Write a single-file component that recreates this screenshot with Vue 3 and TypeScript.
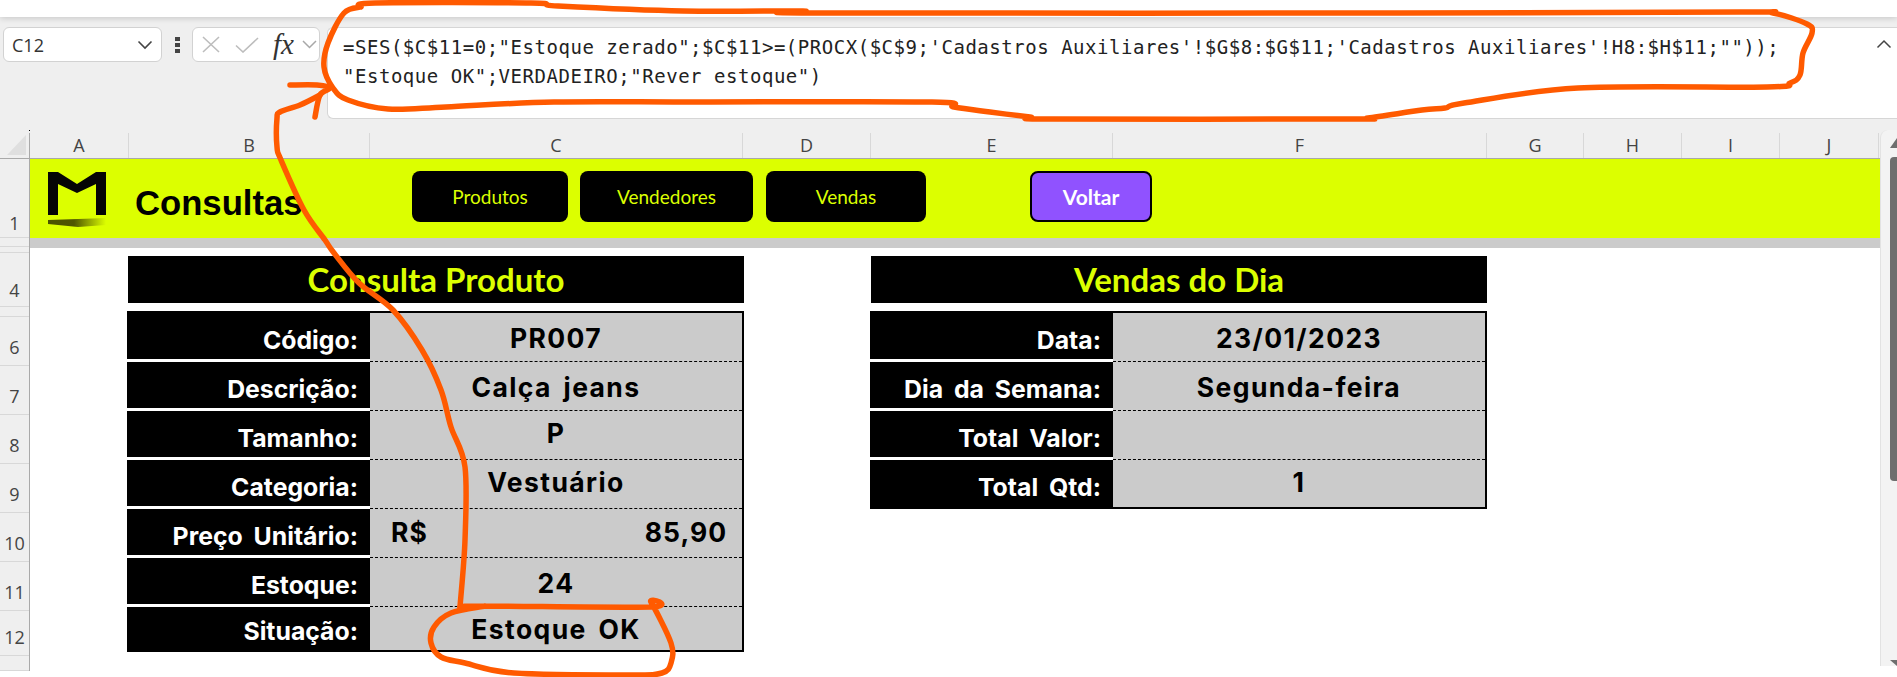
<template>
  <div class="excel">
    <div class="ribbon-edge"></div>

    <div class="formula-bar">
      <div class="name-box">
        <span>C12</span>
        <svg width="16" height="10" viewBox="0 0 16 10"><path d="M1.500 1.500 8 8l6.500-6.500" fill="none" stroke="#444" stroke-width="1.600"/></svg>
      </div>
      <div class="grip"><i></i><i></i><i></i></div>
      <div class="fx-box">
        <svg width="18" height="17" viewBox="0 0 18 17"><path d="M1 1l16 15M17 1 1 16" fill="none" stroke="#bdbdbd" stroke-width="1.600"/></svg>
        <svg class="check-icon" width="24" height="16" viewBox="0 0 24 16"><path d="M1 8.500l7 6.500L23 1" fill="none" stroke="#bdbdbd" stroke-width="1.600"/></svg>
        <span class="fx-label">fx</span>
        <svg width="15" height="9" viewBox="0 0 15 9"><path d="M1 1l6.500 6.500L14 1" fill="none" stroke="#a8a8a8" stroke-width="1.500"/></svg>
      </div>
      <div class="formula-input">
        <div class="formula-text">
          <div>{{ formulaLines[0] }}</div>
          <div>{{ formulaLines[1] }}</div>
        </div>
        <svg class="collapse" width="16" height="10" viewBox="0 0 16 10"><path d="M1.500 8.500 8 2l6.500 6.500" fill="none" stroke="#444" stroke-width="1.500"/></svg>
      </div>
    </div>

    <div class="column-bar">
      <div class="select-all"><div class="corner"></div></div>
      <div
        v-for="col in columns"
        :key="col.name"
        class="column-head"
        :style="{ width: col.width + 'px' }"
      >
        {{ col.name }}
      </div>
    </div>

    <div class="sheet-area">
      <div class="row-bar">
        <div
          v-for="row in rows"
          :key="row.key"
          class="row-head"
          :style="{ height: row.height + 'px' }"
        >
          {{ row.label }}
        </div>
      </div>

      <div class="sheet">
        <div class="banner">
          <svg class="logo" width="58" height="55" viewBox="0 0 58 55">
            <defs>
              <linearGradient id="swoosh" x1="0" x2="1" y1="0" y2="0">
                <stop offset="0" stop-color="#4a5200"/>
                <stop offset="0.45" stop-color="#4f5600"/>
                <stop offset="1" stop-color="#dcff00"/>
              </linearGradient>
            </defs>
            <path d="M0 0H10L29 12 48 0H58V43H48V12L29 21 10 12V43H0Z" fill="#050505"/>
            <path d="M0 48 30 47 58 46V53L30 55 0 52Z" fill="url(#swoosh)"/>
          </svg>
          <div class="banner-title">Consultas</div>
          <div class="nav">
            <button class="nav-btn nav-btn--produtos">Produtos</button>
            <button class="nav-btn nav-btn--vendedores">Vendedores</button>
            <button class="nav-btn nav-btn--vendas">Vendas</button>
            <button class="nav-btn nav-btn--voltar">Voltar</button>
          </div>
        </div>
        <div class="banner-shadow"></div>

        <div class="panels">
          <section v-for="panel in panels" :key="panel.title" class="panel">
            <h2 class="panel-title">{{ panel.title }}</h2>
            <div class="panel-table">
              <div v-for="item in panel.items" :key="item.label" class="panel-row">
                <div class="panel-label">{{ item.label }}</div>
                <div
                  class="panel-value"
                  :class="{ 'panel-value--money': item.money, 'panel-value--raised': item.raised }"
                >
                  <template v-if="item.money">
                    <span>R$</span>
                    <span>{{ item.value }}</span>
                  </template>
                  <template v-else>{{ item.value }}</template>
                </div>
              </div>
            </div>
          </section>
        </div>
      </div>

      <div class="scrollbar">
        <div class="scroll-arrow"></div>
        <div class="scroll-thumb"></div>
        <div class="scroll-arrow scroll-arrow--down"></div>
      </div>
    </div>

    <svg class="ink" width="1897" height="677" viewBox="0 0 1897 677">
      <path v-for="(d, i) in inkPaths" :key="i" :d="d" fill="none" stroke="#ff5a00" stroke-width="5.500" stroke-linecap="round" stroke-linejoin="round"/>
    </svg>
  </div>
</template>

<script setup lang="ts">
type Point = [number, number]

interface PanelItem {
  label: string
  value: string
  money?: boolean
  raised?: boolean
}

const formulaLines = [
  `=SES($C$11=0;"Estoque zerado";$C$11>=(PROCX($C$9;'Cadastros Auxiliares'!$G$8:$G$11;'Cadastros Auxiliares'!H8:$H$11;""));`,
  `"Estoque OK";VERDADEIRO;"Rever estoque")`,
]

const columns = [
  { name: 'A', width: 99 },
  { name: 'B', width: 241 },
  { name: 'C', width: 373 },
  { name: 'D', width: 128 },
  { name: 'E', width: 242 },
  { name: 'F', width: 374 },
  { name: 'G', width: 97 },
  { name: 'H', width: 98 },
  { name: 'I', width: 98 },
  { name: 'J', width: 99 },
]

const rows = [
  { key: 'r1', label: '1', height: 80 },
  { key: 'r2', label: '', height: 9 },
  { key: 'r3', label: '', height: 1 },
  { key: 'r4', label: '4', height: 54 },
  { key: 'r5', label: '', height: 10 },
  { key: 'r6', label: '6', height: 49 },
  { key: 'r7', label: '7', height: 49 },
  { key: 'r8', label: '8', height: 49 },
  { key: 'r9', label: '9', height: 49 },
  { key: 'r10', label: '10', height: 49 },
  { key: 'r11', label: '11', height: 49 },
  { key: 'r12', label: '12', height: 45 },
  { key: 'r13', label: '', height: 15 },
]

const panels: { title: string; items: PanelItem[] }[] = [
  {
    title: 'Consulta Produto',
    items: [
      { label: 'Código:', value: 'PR007' },
      { label: 'Descrição:', value: 'Calça jeans' },
      { label: 'Tamanho:', value: 'P', raised: true },
      { label: 'Categoria:', value: 'Vestuário', raised: true },
      { label: 'Preço Unitário:', value: '85,90', money: true, raised: true },
      { label: 'Estoque:', value: '24' },
      { label: 'Situação:', value: 'Estoque OK', raised: true },
    ],
  },
  {
    title: 'Vendas do Dia',
    items: [
      { label: 'Data:', value: '23/01/2023' },
      { label: 'Dia da Semana:', value: 'Segunda-feira' },
      { label: 'Total Valor:', value: '' },
      { label: 'Total Qtd:', value: '1', raised: true },
    ],
  },
]

// the orange pen marks drawn over the screenshot
const formulaLoop: Point[] = [
  [361, 7], [375, 3], [531, 3], [558, 6], [683, 11], [803, 11], [820, 13], [1400, 13], [1740, 12],
  [1773, 13], [1807, 24], [1812, 33], [1803, 53], [1800, 75], [1790, 83], [1767, 87], [1578, 88],
  [1464, 103], [1445, 108], [1422, 110], [1368, 118], [1349, 119], [1053, 119], [1030, 117],
  [990, 112], [954, 107], [932, 102], [700, 102], [554, 102], [446, 107], [388, 109], [348, 100],
  [333, 88], [324, 67], [328, 43], [344, 13], [361, 7],
]
const arrowHead: Point[] = [[290, 85], [317, 85], [330, 88], [320, 95], [315, 117]]
const arrowLine: Point[] = [
  [320, 95], [300, 105], [280, 112], [277, 118], [277, 147], [281, 160], [304, 210], [325, 240],
  [334, 253], [359, 283], [393, 310], [422, 350], [441, 390], [451, 427], [465, 467], [465, 540], [460, 607],
]
const statusLoop: Point[] = [
  [460, 607], [485, 606], [650, 607], [651, 602], [671, 643], [671, 663], [662, 673], [630, 675],
  [514, 673], [465, 663], [441, 657], [431, 643], [434, 627], [451, 613], [485, 606],
]

function smooth(points: Point[]): string {
  let d = `M${points[0][0]} ${points[0][1]}`
  for (let i = 0; i < points.length - 1; i++) {
    const p0 = points[Math.max(i - 1, 0)]
    const p1 = points[i]
    const p2 = points[i + 1]
    const p3 = points[Math.min(i + 2, points.length - 1)]
    const c1x = p1[0] + (p2[0] - p0[0]) / 6
    const c1y = p1[1] + (p2[1] - p0[1]) / 6
    const c2x = p2[0] - (p3[0] - p1[0]) / 6
    const c2y = p2[1] - (p3[1] - p1[1]) / 6
    d += `C${c1x.toFixed(1)} ${c1y.toFixed(1)} ${c2x.toFixed(1)} ${c2y.toFixed(1)} ${p2[0]} ${p2[1]}`
  }
  return d
}

const inkPaths = [formulaLoop, arrowHead, arrowLine, statusLoop].map(smooth)
</script>

<style>
html,
body {
  margin: 0;
  background: #fff;
}
</style>

<style scoped>
.excel {
  position: relative;
  width: 1897px;
  height: 677px;
  overflow: hidden;
  background: #fff;
  font-family: "Open Sans", "Liberation Sans", sans-serif;
}

.ribbon-edge {
  height: 17px;
  background: #fff;
  box-shadow: 0 1px 6px rgba(0, 0, 0, 0.18);
  position: relative;
}

.formula-bar {
  height: 116px;
  box-sizing: border-box;
  padding: 10px 0 0 3px;
  background: #efefef;
  display: flex;
  align-items: flex-start;
}

.name-box {
  width: 159px;
  height: 35px;
  box-sizing: border-box;
  padding: 0 8px 0 8px;
  background: #fff;
  border: 1px solid #d2d2d2;
  border-radius: 6px;
  display: flex;
  align-items: center;
  justify-content: space-between;
  font-size: 18px;
  color: #333;
}

.grip {
  width: 30px;
  height: 35px;
  display: flex;
  flex-direction: column;
  align-items: center;
  justify-content: center;
  gap: 2px;
}

.grip i {
  width: 5px;
  height: 4px;
  background: #444;
}

.fx-box {
  width: 128px;
  height: 35px;
  box-sizing: border-box;
  padding: 0 2px 0 9px;
  background: #fff;
  border: 1px solid #d2d2d2;
  border-radius: 6px;
  display: flex;
  align-items: center;
}

.check-icon {
  margin-left: 15px;
}

.fx-label {
  width: 21px;
  margin: 0 8px 0 14px;
  font-family: "Liberation Serif", serif;
  font-style: italic;
  font-size: 29px;
  line-height: 33px;
  color: #333;
}

.formula-input {
  margin-left: 7px;
  flex: 1;
  height: 92px;
  box-sizing: border-box;
  padding: 5px 0 0 15px;
  background: #fff;
  border: 1px solid #d6d6d6;
  border-right: none;
  border-radius: 6px 0 0 6px;
  position: relative;
}

.formula-text {
  font-family: "DejaVu Sans Mono", monospace;
  font-size: 19px;
  letter-spacing: 0.53px;
  line-height: 29px;
  color: #222;
  white-space: pre;
}

.collapse {
  position: absolute;
  right: 5px;
  top: 11px;
}

.column-bar {
  height: 25px;
  display: flex;
  background: #efefef;
  border-bottom: 1px solid #a9a9a9;
  margin-bottom: -1px;
  position: relative;
  padding-right: 18px;
}

.select-all {
  position: relative;
  width: 30px;
  box-sizing: border-box;
  padding: 2px 3px 3px 7px;
  border-right: 1px solid #a9a9a9;
}

.select-all::before {
  content: "";
  position: absolute;
  right: -1px;
  top: -3px;
  width: 1px;
  height: 1px;
  background: #000;
}

.corner {
  width: 100%;
  height: 100%;
  background: #dfdfdf;
  clip-path: polygon(100% 0, 100% 100%, 0 100%);
}

.column-head {
  box-sizing: border-box;
  border-right: 1px solid #d8d8d8;
  text-align: center;
  font-size: 18px;
  line-height: 25px;
  color: #444;
}

.sheet-area {
  display: flex;
  align-items: flex-start;
}

.row-bar {
  width: 30px;
  flex: none;
  background: #efefef;
  border-right: 1px solid #a9a9a9;
  box-sizing: border-box;
}

.row-head {
  box-sizing: border-box;
  border-bottom: 1px solid #d8d8d8;
  padding-bottom: 5px;
  overflow: hidden;
  display: flex;
  align-items: flex-end;
  justify-content: center;
  font-size: 18px;
  line-height: 25px;
  color: #444;
}

.row-head:first-child {
  padding-bottom: 1px;
}

.row-head:nth-child(4) {
  padding-bottom: 3px;
}

.sheet {
  width: 1850px;
  flex: none;
}

.banner {
  height: 80px;
  background: #dcff00;
  display: flex;
  align-items: flex-start;
}

.logo {
  margin: 14px 0 0 18px;
  flex: none;
}

.banner-title {
  margin: 25px 0 0 29px;
  width: 277px;
  flex: none;
  font-family: "Liberation Sans", Arial, sans-serif;
  font-weight: 700;
  font-size: 34.670px;
  line-height: 40px;
  color: #000;
}

.nav {
  display: flex;
  margin-top: 13px;
  gap: 12px;
}

.nav-btn {
  height: 51px;
  padding: 0;
  background: #000;
  border: none;
  border-radius: 8px;
  font-family: Lato, "Open Sans", sans-serif;
  font-size: 19px;
  color: #dcff00;
}

.nav-btn--produtos {
  width: 156px;
}

.nav-btn--vendedores {
  width: 173px;
}

.nav-btn--vendas {
  width: 160px;
  margin-left: 1px;
}

.nav-btn--voltar {
  width: 122px;
  margin-left: 92px;
  box-sizing: border-box;
  background: #9052ff;
  border: 2px solid #000;
  font-weight: 700;
  font-size: 21px;
  color: #fff;
}

.banner-shadow {
  height: 10px;
  background: #cbcbcb;
}

.panels {
  display: flex;
  gap: 126px;
  padding: 8px 0 0 97px;
  background: #fff;
}

.panel {
  width: 617px;
}

.panel-title {
  margin: 0 0 8px 1px;
  height: 47px;
  background: #000;
  color: #dcff00;
  text-align: center;
  font-family: Lato, "Open Sans", sans-serif;
  font-weight: 700;
  font-size: 33px;
  line-height: 46px;
}

.panel-table {
  border: 2px solid #000;
  border-left: none;
  background: #000;
}

.panel-row {
  display: flex;
  height: 49px;
  box-sizing: border-box;
}

.panel:first-child .panel-row:last-child {
  height: 43px;
}

.panel:last-child .panel-row:last-child {
  height: 47px;
}

.panel-row:not(:last-child) .panel-label {
  border-bottom: 3px solid #fff;
}

.panel-row:not(:last-child) .panel-value {
  border-bottom: 1px dashed #000;
}

.panel-label {
  width: 243px;
  flex: none;
  box-sizing: border-box;
  padding: 10px 12px 0 0;
  background: #000;
  color: #fff;
  text-align: right;
  font-family: Inter, "Liberation Sans", sans-serif;
  font-weight: 700;
  font-size: 24.800px;
  word-spacing: 5px;
  line-height: 34px;
  white-space: nowrap;
}

.panel:first-child .panel-row:last-child .panel-label {
  padding-top: 7px;
}

.panel-value {
  flex: 1;
  box-sizing: border-box;
  padding-top: 3px;
  background: #cbcbcb;
  color: #000;
  text-align: center;
  font-family: Inter, "Liberation Sans", sans-serif;
  font-weight: 700;
  font-size: 26.500px;
  letter-spacing: 1.400px;
  word-spacing: 4px;
  line-height: 44px;
  white-space: nowrap;
}

.panel-value--raised {
  padding-top: 0;
}

.panel-value--money {
  display: flex;
  justify-content: space-between;
  padding: 1px 15px 0 21px;
  letter-spacing: 1px;
}

.scrollbar {
  width: 17px;
  height: 536px;
  margin-top: -28px;
  flex: none;
  background: #f3f3f3;
  border-left: 1px solid #e2e2e2;
  box-sizing: border-box;
  border-radius: 8px 0 0 0;
  position: relative;
  display: flex;
  flex-direction: column;
  align-items: flex-end;
}

.scroll-arrow {
  width: 7px;
  height: 10px;
  margin-top: 8px;
  flex: none;
  background: #6e6e6e;
  clip-path: polygon(100% 0, 100% 100%, 0 100%);
}

.scroll-thumb {
  width: 7px;
  height: 324px;
  margin-top: 9px;
  flex: none;
  background: #6e6e6e;
  border-radius: 4px 0 0 4px;
}

.scroll-arrow--down {
  margin-top: auto;
  height: 6px;
  clip-path: polygon(0 0, 100% 0, 100% 100%);
}

.ink {
  position: absolute;
  left: 0;
  top: 0;
  pointer-events: none;
}
</style>
